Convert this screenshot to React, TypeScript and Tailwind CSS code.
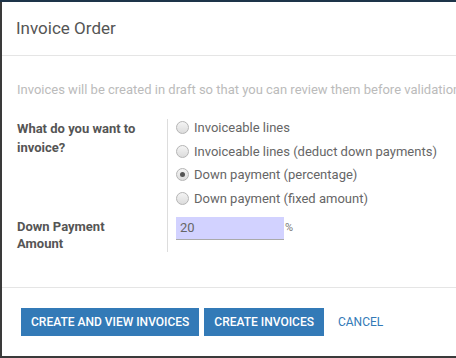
import React from "react";

function Radio({ checked, label }: { checked?: boolean; label: string }) {
  return (
    <div className="flex items-center h-[23.5px]">
      <span className="relative w-[13px] h-[13px] rounded-full border border-[#b5b5b5] bg-gradient-to-b from-[#f4f4f4] to-[#dcdcdc] flex items-center justify-center">
        {checked && <span className="w-[5px] h-[5px] rounded-full bg-[#555]" />}
      </span>
      <span className="ml-[5px] text-[13px] text-[#666]">{label}</span>
    </div>
  );
}

export default function App() {
  return (
    <div className="w-[456px] h-[358px] bg-[#3a3a3a] overflow-hidden" style={{ fontFamily: "Roboto, 'Liberation Sans', sans-serif" }}>
      <div className="h-[2px] bg-[#1d3449]" />
      <div className="ml-[2px] w-[470px] h-[354px] bg-white flex flex-col">
        <div className="h-[54px] border-b border-[#e5e5e5] flex items-center px-[14px]">
          <span className="text-[17px] text-[#555]">Invoice Order</span>
        </div>
        <div className="pt-[24px] pl-[15px] whitespace-nowrap text-[13px] leading-[20px] text-[#bbb]">
          Invoices will be created in draft so that you can review them before validation.
        </div>
        <div className="mt-[19px] flex h-[133px]">
          <div className="w-[165px] pl-[15px] flex flex-col text-[13px] leading-[19px] text-[#555] font-bold">
            <div>What do you want to<br />invoice?</div>
            <div className="mt-[61px] leading-[17px]">Down Payment<br />Amount</div>
          </div>
          <div className="w-px bg-[#ddd]" />
          <div className="pl-[8px] flex flex-col -mt-[3px]">
            <Radio label="Invoiceable lines" />
            <Radio label="Invoiceable lines (deduct down payments)" />
            <Radio checked label="Down payment (percentage)" />
            <Radio label="Down payment (fixed amount)" />
            <div className="mt-[7px] flex items-center">
              <div className="w-[108px] h-[23px] bg-[#d2d2ff] border-b border-[#aaa] flex items-center pl-[4px] text-[13px] text-[#666]">20</div>
              <span className="ml-[1px] text-[11px] text-[#777]">%</span>
            </div>
          </div>
        </div>
        <div className="mt-[35px] border-t border-[#e5e5e5] pt-[20px] pl-[19px] flex items-center gap-[5px]">
          <button className="h-[28px] px-[10px] bg-[#337ab7] text-white text-[12px] font-medium uppercase">Create and view invoices</button>
          <button className="h-[28px] px-[10px] bg-[#337ab7] text-white text-[12px] font-medium uppercase">Create invoices</button>
          <button className="h-[28px] px-[10px] -ml-[1px] text-[#337ab7] text-[12px] uppercase">Cancel</button>
        </div>
      </div>
    </div>
  );
}
